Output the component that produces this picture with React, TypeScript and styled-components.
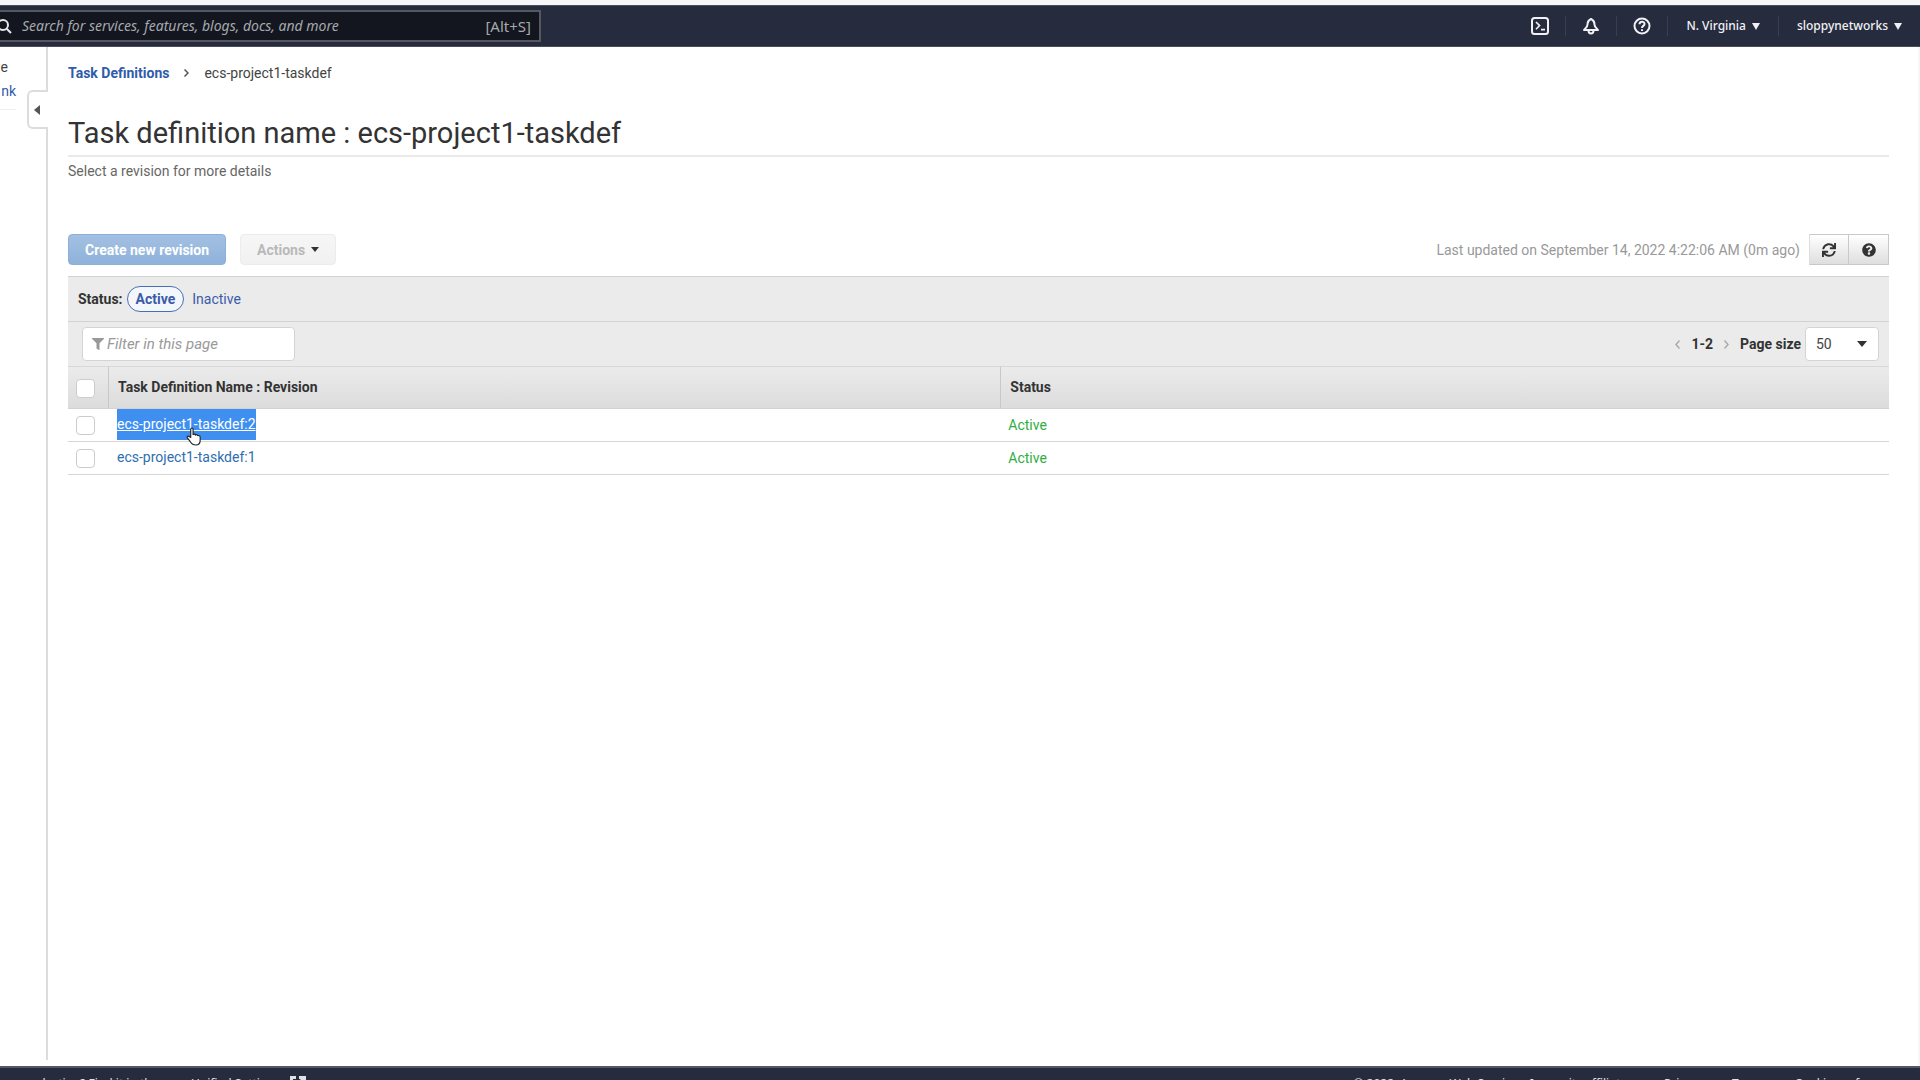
import React from "react";
import styled, { createGlobalStyle, css } from "styled-components";
import { FaFilter, FaSync, FaQuestionCircle } from "react-icons/fa";

const Global = createGlobalStyle`
  *, *::before, *::after { box-sizing: border-box; }
  body { margin: 0; background: #fff; color: #444; font: 14px/20px Roboto, "Liberation Sans", sans-serif; }
  button, input, select { font: inherit; margin: 0; }
  a { color: #2f5bab; text-decoration: none; }
`;

const Shell = styled.div`
  display: flex;
  flex-direction: column;
  height: 100vh;
  overflow: hidden;
  border-top: 5px solid #f6f7f9;
`;

const TopBar = styled.header`
  flex: none;
  display: flex;
  align-items: center;
  justify-content: space-between;
  height: 42px;
  background: #262b3e;
  border-top: 1px solid #4b4e5a;
  border-bottom: 1px solid #4b4e5a;
  font-family: "Noto Sans", sans-serif;
  color: #f0f1f4;
`;

const SearchBox = styled.label`
  display: flex;
  align-items: center;
  width: 541px;
  height: 32px;
  padding-right: 8px;
  overflow: hidden;
  background: #13161e;
  border: 2px solid #55595f;
  border-left: 0;
  color: #a5a9ad;
`;

const SearchIcon = styled.svg`
  flex: none;
  width: 16px;
  height: 16px;
  margin: 0 7px 0 -4px;
  color: #e4e6e8;
`;

const SearchInput = styled.input`
  flex: 1;
  min-width: 0;
  padding: 0 3px;
  border: 0;
  outline: 0;
  background: transparent;
  color: inherit;
  font-size: 14px;
  &::placeholder { color: #a5a9ad; font-style: italic; opacity: 1; }
`;

const Shortcut = styled.span`
  font-size: 15px;
`;

const TopNav = styled.nav`
  display: flex;
  align-items: center;
`;

const TopItem = styled.button<{ $icon?: boolean }>`
  display: flex;
  align-items: center;
  justify-content: center;
  gap: 6px;
  height: 20px;
  padding: 0 18px;
  border: 0;
  border-left: 1px solid #3a3f50;
  background: none;
  color: inherit;
  font-size: 12px;
  font-weight: 500;
  ${(p) => p.$icon && css`width: 51px; padding: 0;`}
  &:first-child { border-left: 0; }
  svg { display: block; }
`;

const Body = styled.div`
  flex: 1;
  min-height: 0;
  display: flex;
`;

const Side = styled.aside`
  position: relative;
  flex: none;
  width: 48px;
  margin-bottom: 6px;
  padding-top: 8px;
  border-right: 2px solid #dcdcdc;
`;

const SideText = styled.div`
  display: flex;
  justify-content: flex-end;
  width: 16px;
  padding-right: 8px;
  line-height: 24px;
`;

const SideLink = styled.a`
  display: flex;
  justify-content: flex-end;
  width: 16px;
  padding-bottom: 6px;
  line-height: 24px;
  border-bottom: 1px solid #eeeff3;
`;

const Collapse = styled.button`
  position: absolute;
  top: 43px;
  right: -2px;
  display: flex;
  align-items: center;
  justify-content: center;
  width: 21px;
  height: 39px;
  padding: 0 3px 0 0;
  border: 2px solid #dcdcdc;
  border-right: 0;
  border-radius: 6px 0 0 6px;
  background: #fff;
`;

const Main = styled.main`
  flex: 1;
  min-width: 0;
  padding: 16px 29px 0 20px;
  border-right: 2px solid #f6f6f6;
`;

const Crumbs = styled.nav`
  display: flex;
  align-items: center;
  gap: 15px;
  a { font-weight: 700; }
`;

const Title = styled.h1`
  margin: 30px 0 4px;
  padding-bottom: 2px;
  border-bottom: 2px solid #eaeaea;
  color: #333;
  font-size: 29px;
  line-height: 40px;
  font-weight: 400;
`;

const Hint = styled.p`
  margin: 0;
  color: #666;
`;

const Toolbar = styled.div`
  display: flex;
  align-items: center;
  gap: 14px;
  margin: 53px 0 11px;
`;

const Button = styled.button<{ $primary?: boolean }>`
  display: flex;
  align-items: center;
  gap: 6px;
  height: 31px;
  padding: 0 16px;
  border: 1px solid #ececec;
  border-radius: 4px;
  background: linear-gradient(#f6f6f6, #f1f1f1);
  color: #b9b9b9;
  font-weight: 700;
  svg { color: #333; }
  ${(p) => p.$primary && css`
    border-color: #8fb0d6;
    background: linear-gradient(#a3c0e2, #8fb2da);
    color: #fff;
  `}
`;

const Updated = styled.span`
  margin-left: auto;
  margin-right: -5px;
  color: #999;
`;

const IconGroup = styled.div`
  display: flex;
`;

const IconButton = styled.button`
  display: flex;
  align-items: center;
  justify-content: center;
  width: 40px;
  height: 31px;
  padding: 0;
  border: 1px solid #c9c9c9;
  border-left-color: #ddd;
  background: linear-gradient(#fff, #dedede);
  color: #333;
  & + & { border-left: 0; }
`;

const Bar = styled.div`
  display: flex;
  align-items: center;
  height: 45px;
  padding: 0 10px;
  background: #ebebeb;
  border-top: 1px solid #d2d2d2;
  color: #333;
`;

const Strong = styled.strong`
  font-weight: 700;
`;

const StatusLink = styled.a<{ $on?: boolean }>`
  padding: 0 8px;
  color: #3a5ba9;
  ${(p) => p.$on && css`
    margin-left: 4px;
    line-height: 24px;
    border: 1px solid #4a6fb5;
    border-radius: 13px;
    background: #f3f6fa;
    font-weight: 700;
  `}
`;

const FilterBox = styled.label`
  display: flex;
  align-items: center;
  gap: 3px;
  width: 213px;
  height: 34px;
  margin-left: 4px;
  padding: 0 9px;
  background: #fff;
  border: 1px solid #d4d4d4;
  border-radius: 4px;
  color: #999;
`;

const FilterInput = styled.input`
  flex: 1;
  min-width: 0;
  padding: 0;
  border: 0;
  outline: 0;
  font-size: 15px;
  &::placeholder { color: #999; font-style: italic; opacity: 1; }
`;

const Pager = styled.div`
  display: flex;
  align-items: center;
  gap: 11px;
  margin-left: auto;
`;

const PageArrow = styled.button`
  display: flex;
  padding: 0;
  border: 0;
  background: none;
  color: #aaa;
`;

const SizeLabel = styled.label`
  display: flex;
  align-items: center;
  gap: 4px;
  font-weight: 700;
`;

const SelectWrap = styled.span`
  display: grid;
  align-items: center;
  > * { grid-area: 1 / 1; }
  svg { justify-self: end; margin-right: 12px; pointer-events: none; }
`;

const Select = styled.select`
  appearance: none;
  width: 74px;
  height: 34px;
  padding: 0 10px;
  border: 1px solid #d4d4d4;
  border-radius: 4px;
  background: #fff;
  color: #444;
  font-weight: 400;
`;

const Table = styled.table`
  width: 100%;
  border-collapse: separate;
  border-spacing: 0;
  table-layout: fixed;
  color: #333;
`;

const CheckCol = styled.col`
  width: 40px;
`;

const NameCol = styled.col`
  width: 49%;
`;

const Th = styled.th`
  height: 43px;
  padding: 0 9px 1px;
  border-top: 1px solid #d8d8d8;
  border-bottom: 1px solid #d2d2d2;
  border-left: 1px solid #c8c8c8;
  background: linear-gradient(#ebebeb, #dcdcdc);
  text-align: left;
  font-weight: 700;
  &:first-child { border-left: 0; padding-left: 8px; }
`;

const Td = styled.td<{ $green?: boolean }>`
  height: 33px;
  padding: 0 8px 1px;
  border-bottom: 1px solid #d6d6d6;
  ${(p) => p.$green && css`color: #2fae3f;`}
`;

const Check = styled.input`
  appearance: none;
  display: block;
  width: 19px;
  height: 19px;
  margin: 2px 0 0;
  border: 1px solid #ccc;
  border-radius: 4px;
  background: #fff;
`;

const RowLink = styled.a<{ $selected?: boolean }>`
  position: relative;
  display: block;
  width: fit-content;
  margin-left: 1px;
  line-height: 31px;
  color: #2f6eaf;
  ${(p) => p.$selected && css`
    background: #3f8ff0;
    color: #fff;
    text-decoration: underline;
  `}
`;

const Hand = styled.svg`
  position: absolute;
  left: 69px;
  top: 18px;
  width: 17px;
  height: 19px;
`;

const Footer = styled.footer`
  flex: none;
  display: flex;
  justify-content: space-between;
  height: 14px;
  padding: 7px 17px 0 30px;
  overflow: hidden;
  border-top: 2px solid #55585f;
  background: #262b3e;
  color: #dfe1e6;
  font: 12px/18px "Noto Sans", sans-serif;
  white-space: nowrap;
  a { color: inherit; }
`;

const FootGroup = styled.div<{ $gap: number }>`
  display: flex;
  gap: ${(p) => p.$gap}px;
`;

const SettingsLink = styled.a`
  display: flex;
  gap: 10px;
`;

const Caret = ({ w = 8, h = 5 }: { w?: number; h?: number }) => (
  <svg width={w} height={h} viewBox="0 0 8 5" preserveAspectRatio="none" aria-hidden="true">
    <path d="M0 0h8L4 5z" fill="currentColor" />
  </svg>
);

const rows = [
  { name: "ecs-project1-taskdef:2", status: "Active", selected: true },
  { name: "ecs-project1-taskdef:1", status: "Active", selected: false },
];

export default function App() {
  return (
    <Shell>
      <Global />
      <TopBar>
        <SearchBox>
          <SearchIcon viewBox="0 0 16 16" fill="none" stroke="currentColor" strokeWidth="2">
            <circle cx="7" cy="7" r="5" />
            <path d="M10.7 10.7L15 15" />
          </SearchIcon>
          <SearchInput aria-label="Search" placeholder="Search for services, features, blogs, docs, and more" />
          <Shortcut>[Alt+S]</Shortcut>
        </SearchBox>
        <TopNav>
          <TopItem $icon aria-label="CloudShell">
            <svg width="18" height="18" viewBox="0 0 18 18" fill="none" stroke="currentColor" strokeWidth="2">
              <rect x="1" y="1" width="16" height="16" rx="2.5" />
              <path d="M5 5l3.6 3.6L5 12.2M10 12.6h4" strokeWidth="1.6" />
            </svg>
          </TopItem>
          <TopItem $icon aria-label="Notifications">
            <svg width="18" height="18" viewBox="0 0 18 18" fill="none" stroke="currentColor" strokeWidth="2" strokeLinejoin="round">
              <path d="M9 2C7 3 5.500 4 5.500 7.500 5.500 10 3.500 11 2 13h14c-1.500-2-3.500-3-3.500-5.500C12.500 4 11 3 9 2z" />
              <path d="M6.500 13.500c0 4 5 4 5 0" />
            </svg>
          </TopItem>
          <TopItem $icon aria-label="Help">
            <svg width="18" height="18" viewBox="0 0 18 18" fill="none" stroke="currentColor" strokeWidth="2">
              <circle cx="9" cy="9" r="7.500" />
              <path d="M6.500 7.300C6.500 4 11.500 4 11.500 7c0 2-2.500 1.800-2.500 4M9 12.200v1.800" />
            </svg>
          </TopItem>
          <TopItem>N. Virginia <Caret h={7} /></TopItem>
          <TopItem>sloppynetworks <Caret h={7} /></TopItem>
        </TopNav>
      </TopBar>
      <Body>
        <Side>
          <SideText>e</SideText>
          <SideLink href="#">nk</SideLink>
          <Collapse aria-label="Collapse menu">
            <svg width="6" height="10" viewBox="0 0 6 10"><path d="M6 0v10L0 5z" fill="#555" /></svg>
          </Collapse>
        </Side>
        <Main>
          <Crumbs>
            <a href="#">Task Definitions</a>
            <svg width="5" height="8" viewBox="0 0 5 8" fill="none" stroke="#555" strokeWidth="1.500"><path d="M.5.5L4 4 .5 7.500" /></svg>
            <span>ecs-project1-taskdef</span>
          </Crumbs>
          <Title>Task definition name : ecs-project1-taskdef</Title>
          <Hint>Select a revision for more details</Hint>
          <Toolbar>
            <Button $primary>Create new revision</Button>
            <Button>Actions <Caret /></Button>
            <Updated>Last updated on September 14, 2022 4:22:06 AM (0m ago)</Updated>
            <IconGroup>
              <IconButton aria-label="Refresh"><FaSync size={14} /></IconButton>
              <IconButton aria-label="Help"><FaQuestionCircle size={14} /></IconButton>
            </IconGroup>
          </Toolbar>
          <Bar>
            <Strong>Status:</Strong>
            <StatusLink href="#" $on>Active</StatusLink>
            <StatusLink href="#">Inactive</StatusLink>
          </Bar>
          <Bar>
            <FilterBox>
              <FaFilter size={12} />
              <FilterInput aria-label="Filter" placeholder="Filter in this page" />
            </FilterBox>
            <Pager>
              <PageArrow aria-label="Previous page">
                <svg width="5" height="9" viewBox="0 0 5 9" fill="none" stroke="currentColor" strokeWidth="1.500"><path d="M4.500.5L1 4.500l3.500 4" /></svg>
              </PageArrow>
              <Strong>1-2</Strong>
              <PageArrow aria-label="Next page">
                <svg width="5" height="9" viewBox="0 0 5 9" fill="none" stroke="currentColor" strokeWidth="1.500"><path d="M.5.5L4 4.500.5 8.500" /></svg>
              </PageArrow>
              <SizeLabel>
                Page size
                <SelectWrap>
                  <Select defaultValue="50"><option>50</option></Select>
                  <Caret w={10} h={6} />
                </SelectWrap>
              </SizeLabel>
            </Pager>
          </Bar>
          <Table>
            <colgroup><CheckCol /><NameCol /><col /></colgroup>
            <thead>
              <tr>
                <Th><Check type="checkbox" aria-label="Select all" /></Th>
                <Th>Task Definition Name : Revision</Th>
                <Th>Status</Th>
              </tr>
            </thead>
            <tbody>
              {rows.map((r) => (
                <tr key={r.name}>
                  <Td><Check type="checkbox" aria-label={r.name} /></Td>
                  <Td>
                    <RowLink href="#" $selected={r.selected}>
                      {r.name}
                      {r.selected && (
                        <Hand viewBox="0 0 18 20" fill="#fff" stroke="#222" strokeWidth="1.200" strokeLinejoin="round">
                          <path d="M5 11V2.500c0-2 2.500-2 2.500 0V8c1-1 2.300-.6 2.500.5 1-.8 2.300-.4 2.500.7 1-.6 2.500 0 2.500 1.300V14c0 3-1.500 5-4.500 5S6 18 4.500 15.500L1.500 11.500c-1-1.600 1-2.500 2-1.500z" />
                        </Hand>
                      )}
                    </RowLink>
                  </Td>
                  <Td $green>{r.status}</Td>
                </tr>
              ))}
            </tbody>
          </Table>
        </Main>
      </Body>
      <Footer>
        <FootGroup $gap={6}>
          <span>selection? Find it in the new</span>
          <SettingsLink href="#">
            Unified Settings
            <svg width="16" height="16" viewBox="0 0 16 16" fill="none" stroke="currentColor" strokeWidth="3">
              <path d="M6 2.500H1.500v12h12V10M9 2.500h5.500V7M14 3L7 10" />
            </svg>
          </SettingsLink>
        </FootGroup>
        <FootGroup $gap={28}>
          <span>© 2022, Amazon Web Services, Inc. or its affiliates.</span>
          <a href="#">Privacy</a>
          <a href="#">Terms</a>
          <a href="#">Cookie preferences</a>
        </FootGroup>
      </Footer>
    </Shell>
  );
}
